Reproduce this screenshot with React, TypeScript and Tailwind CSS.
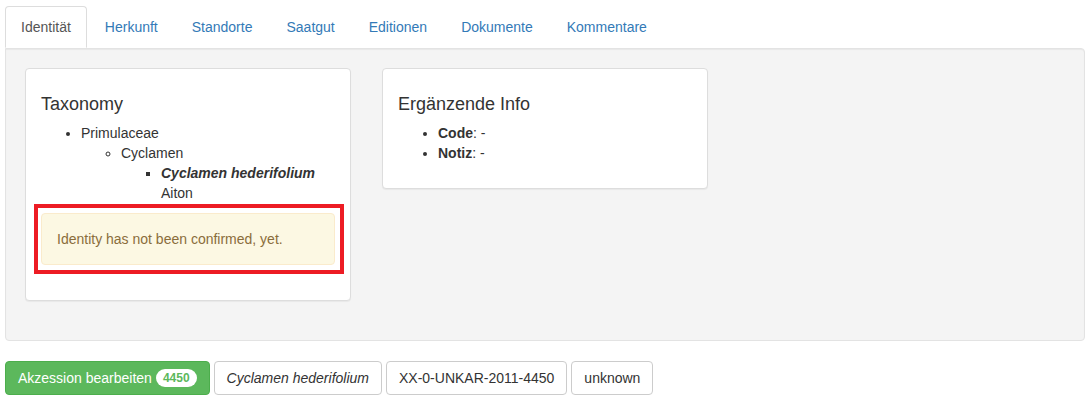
import React from "react";

export default function App() {
  const tabs = ["Identität", "Herkunft", "Standorte", "Saatgut", "Editionen", "Dokumente", "Kommentare"];
  return (
    <div
      className="bg-white min-h-[400px] pt-[6px] pl-[5px] text-[14px] leading-[20px] text-[#333]"
      style={{ fontFamily: '"Liberation Sans", Arial, Helvetica, sans-serif' }}
    >
      <div className="w-[1080px]">
        <ul className="flex">
          {tabs.map((t, i) =>
            i === 0 ? (
              <li key={t} className="mr-[2px] -mb-px relative z-10">
                <span className="block px-[15px] py-[10px] border border-[#ddd] border-b-transparent rounded-t-[4px] bg-white text-[#555]">
                  {t}
                </span>
              </li>
            ) : (
              <li key={t} className="mr-[2px]">
                <span className="block px-[15px] py-[10px] border border-transparent text-[#337ab7]">{t}</span>
              </li>
            )
          )}
        </ul>
        <div className="bg-[#f4f4f4] border border-[#e3e3e3] rounded-[4px] rounded-tl-none shadow-[inset_0_1px_1px_rgba(0,0,0,0.05)] p-[19px] mb-[20px]">
          <div className="flex gap-[31px] items-start">
            <div className="w-[326px] bg-white border border-[#ddd] rounded-[4px] shadow-[0_1px_1px_rgba(0,0,0,0.05)] mb-[20px]">
              <div className="p-[15px]">
                <h4 className="text-[18px] leading-[20px] mt-[10px] mb-[9px] font-medium">Taxonomy</h4>
                <ul className="list-disc pl-[40px] mb-[10px]">
                  <li>
                    Primulaceae
                    <ul className="list-[circle] pl-[40px]">
                      <li>
                        Cyclamen
                        <ul className="list-[square] pl-[40px]">
                          <li>
                            <b className="italic font-bold">Cyclamen hederifolium</b> Aiton
                          </li>
                        </ul>
                      </li>
                    </ul>
                  </li>
                </ul>
                <div className="relative mb-[20px]">
                  <div className="bg-[#fcf8e3] border border-[#faebcc] text-[#8a6d3b] rounded-[4px] p-[15px]">
                    Identity has not been confirmed, yet.
                  </div>
                  <div className="absolute -left-[7px] -right-[9px] -top-[9px] -bottom-[9px] border-4 border-[#ed1c24]"></div>
                </div>
              </div>
            </div>
            <div className="w-[326px] bg-white border border-[#ddd] rounded-[4px] shadow-[0_1px_1px_rgba(0,0,0,0.05)] mb-[20px]">
              <div className="p-[15px]">
                <h4 className="text-[18px] leading-[20px] mt-[10px] mb-[9px] font-medium">Ergänzende Info</h4>
                <ul className="list-disc pl-[40px] mb-[10px]">
                  <li>
                    <b>Code</b>: -
                  </li>
                  <li>
                    <b>Notiz</b>: -
                  </li>
                </ul>
              </div>
            </div>
          </div>
        </div>
        <div className="flex gap-[4px]">
          <span className="inline-flex items-center px-[12px] py-[6px] border border-[#4cae4c] bg-[#5cb85c] text-white rounded-[4px]">
            Akzession bearbeiten
            <span className="ml-[4px] bg-white text-[#5cb85c] text-[12px] leading-[12px] font-bold rounded-[10px] px-[7px] py-[3px]">
              4450
            </span>
          </span>
          <span className="inline-flex items-center px-[12px] py-[6px] border border-[#ccc] bg-white rounded-[4px] italic">
            Cyclamen hederifolium
          </span>
          <span className="inline-flex items-center px-[12px] py-[6px] border border-[#ccc] bg-white rounded-[4px]">
            XX-0-UNKAR-2011-4450
          </span>
          <span className="inline-flex items-center px-[12px] py-[6px] border border-[#ccc] bg-white rounded-[4px]">
            unknown
          </span>
        </div>
      </div>
    </div>
  );
}
